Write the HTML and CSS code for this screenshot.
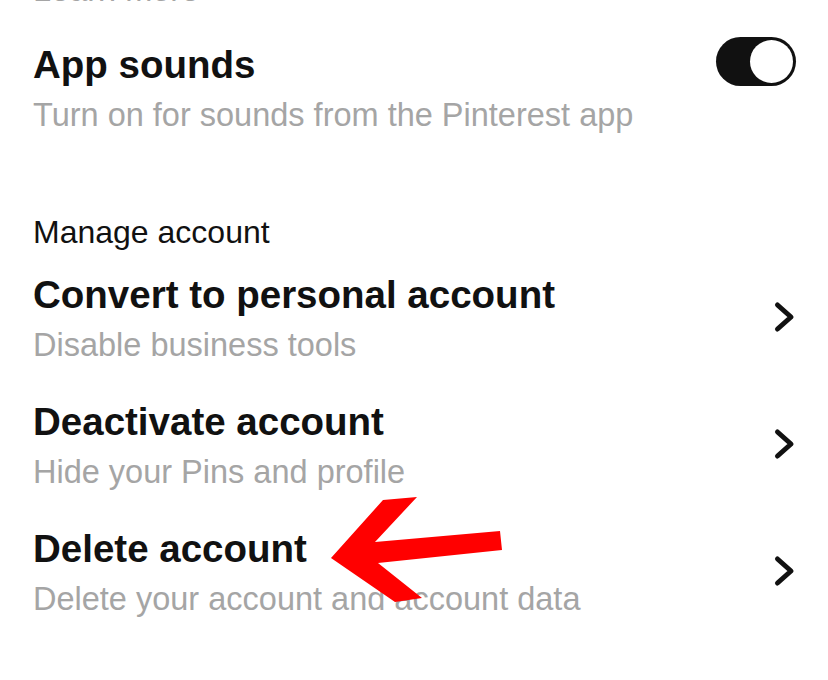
FILE: index.html
```html
<!DOCTYPE html>
<html lang="en">
  <head>
    <meta charset="UTF-8" />
    <meta name="viewport" content="width=device-width, initial-scale=1.0" />
    <title>Account settings</title>
    <link rel="stylesheet" href="styles.css">
  </head>
  <body>
    <div class="page">
      <div class="cut">Learn more</div>

      <div class="item toggle-item">
        <div class="item-text">
          <div class="item-title">App sounds</div>
          <div class="item-sub">Turn on for sounds from the Pinterest app</div>
        </div>
        <div class="toggle"><span class="knob"></span></div>
      </div>

      <div class="section-title">Manage account</div>

      <div class="item">
        <div class="item-text">
          <div class="item-title">Convert to personal account</div>
          <div class="item-sub">Disable business tools</div>
        </div>
        <svg class="chevron" width="24" height="32" viewBox="0 0 24 32">
          <polyline points="5.5,4 19,16 5.5,28" />
        </svg>
      </div>

      <div class="item">
        <div class="item-text">
          <div class="item-title">Deactivate account</div>
          <div class="item-sub">Hide your Pins and profile</div>
        </div>
        <svg class="chevron" width="24" height="32" viewBox="0 0 24 32">
          <polyline points="5.5,4 19,16 5.5,28" />
        </svg>
      </div>

      <div class="item">
        <div class="item-text">
          <div class="item-title">Delete account</div>
          <div class="item-sub">Delete your account and account data</div>
        </div>
        <svg class="chevron" width="24" height="32" viewBox="0 0 24 32">
          <polyline points="5.5,4 19,16 5.5,28" />
        </svg>
      </div>

      <!-- red pointer drawn over the screenshot -->
      <svg class="pointer" width="828" height="680" viewBox="0 0 828 680">
        <polygon points="331,558 383,500 417,497 375,542 500,531 502,550 378,563 422,598 395,602" fill="#ff0000" />
      </svg>
    </div>
  </body>
</html>
```

FILE: styles.css
```css
body {
  margin: 0;
  padding: 0;
  background: #ffffff;
  font-family: "Liberation Sans", Arial, sans-serif;
  color: #111111;
  overflow: hidden;
}
.page {
  position: relative;
  display: flow-root;
  width: 828px;
  height: 680px;
  box-sizing: border-box;
  padding: 0 32px 0 33px;
}
.cut {
  font-size: 32.5px;
  line-height: 40px;
  color: #a5a5a5;
  margin-top: -30px;
}
.item {
  display: flex;
  align-items: center;
  justify-content: space-between;
  padding-bottom: 34px;
}
.toggle-item {
  margin-top: 32px;
  align-items: flex-start;
  padding-bottom: 0;
}
.item-title {
  font-size: 38.5px;
  font-weight: bold;
  line-height: 46px;
  color: #111111;
}
.item-sub {
  font-size: 32.5px;
  line-height: 40px;
  margin-top: 7px;
  color: #a5a5a5;
}
.section-title {
  font-size: 32px;
  line-height: 40px;
  margin-top: 77px;
  margin-bottom: 20px;
  color: #111111;
}
.toggle {
  width: 80px;
  height: 49px;
  margin-top: -5px;
  border-radius: 25px;
  background: #111111;
  display: flex;
  align-items: center;
  justify-content: flex-end;
  padding: 0 3px;
  box-sizing: border-box;
}
.knob {
  width: 43px;
  height: 43px;
  border-radius: 50%;
  background: #ffffff;
}
.chevron {
  margin-top: -4px;
}
.chevron polyline {
  fill: none;
  stroke: #111111;
  stroke-width: 5;
  stroke-linecap: round;
  stroke-linejoin: round;
}
.pointer {
  position: absolute;
  top: 0;
  left: 0;
  pointer-events: none;
}
```
